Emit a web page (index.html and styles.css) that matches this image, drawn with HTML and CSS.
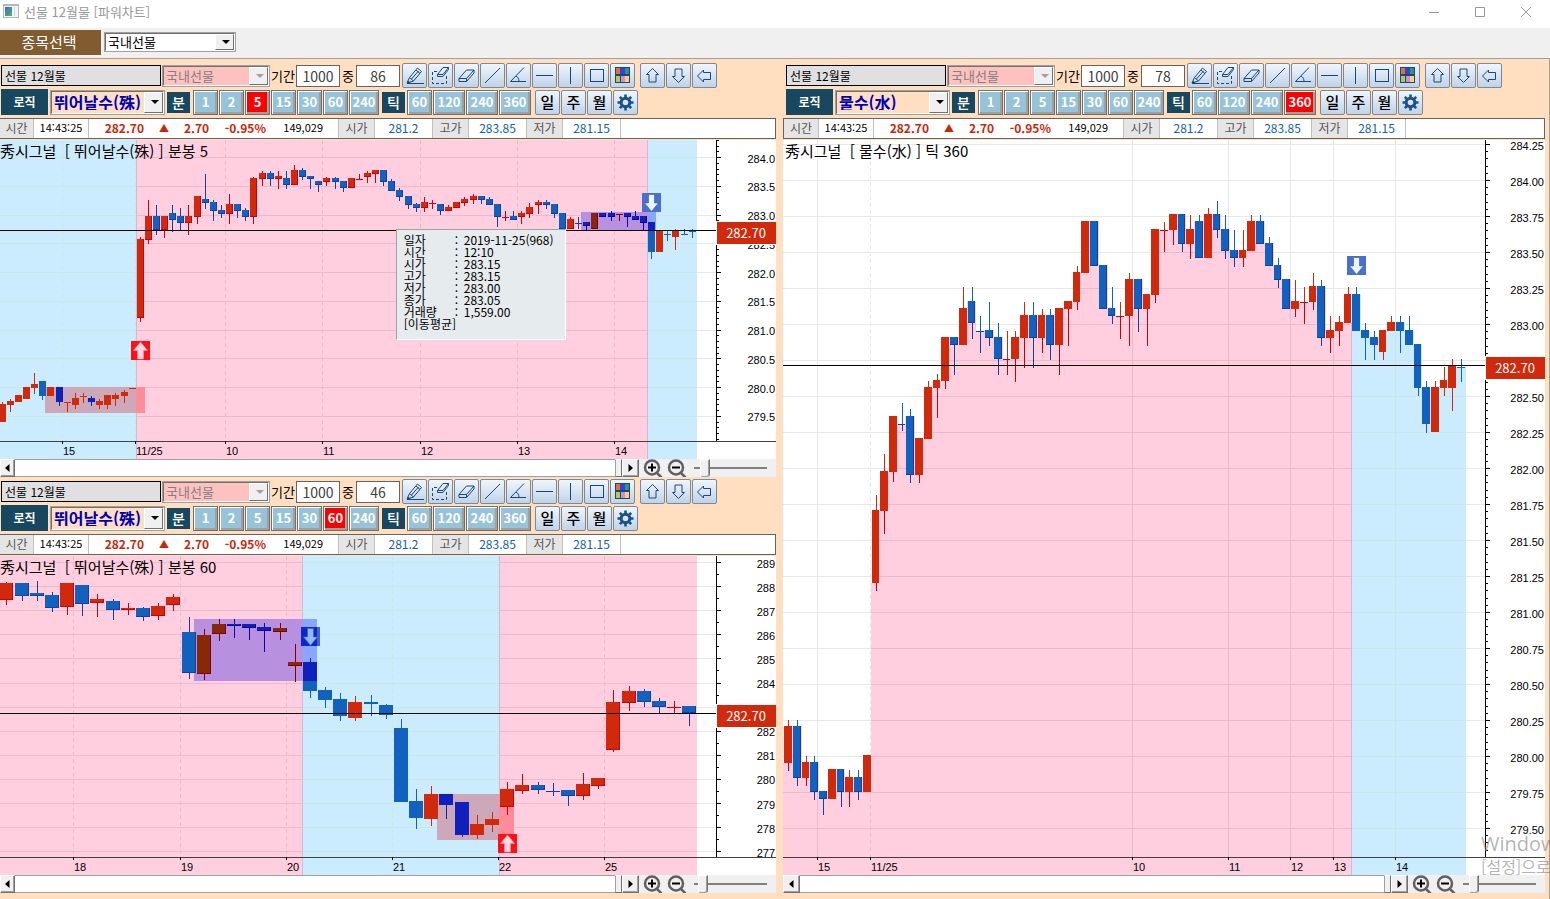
FILE: index.html
```html
<!DOCTYPE html>
<html lang="ko">
<head>
<meta charset="utf-8">
<title>선물 12월물 [파워차트]</title>
<link rel="stylesheet" href="styles.css">
</head>
<body>
<svg class="defs" aria-hidden="true">
  <symbol id="i-pencil" viewBox="0 0 25 25"><path class="s" d="M7.500 14.500L15.500 5l4 3.500-8 9.500M14 7l4 3.500M9.500 16l7-8M7.500 14.500l4 3.500M7.500 14.500L5 20l6.500-2M5 20.500h17"/><path class="f" d="M5 21l1-3.500 2.500 2.500z"/></symbol>
  <symbol id="i-erasebox" viewBox="0 0 25 25"><path class="s" stroke-dasharray="3 2" d="M9 8.500H4.500v12h14v-8"/><path class="s" d="M9.500 11.500l5.500-7h5.500v2l-5.500 7h-5.500zM9.500 11.500h5.500l5.500-7"/></symbol>
  <symbol id="i-eraser" viewBox="0 0 25 25"><path class="s" d="M5 15.500l7.500-8.500h7.500v3l-7.500 8.500H5zM5 15.500h7.500l7.500-8.500M12.500 15.500v3"/></symbol>
  <symbol id="i-line" viewBox="0 0 25 25"><path class="s" d="M5 20L20 5"/></symbol>
  <symbol id="i-angle" viewBox="0 0 25 25"><path class="s" d="M18 4.500L4.500 18.500H20M10 13c2 1 3 3 3 5.500"/></symbol>
  <symbol id="i-hline" viewBox="0 0 25 25"><path class="s" d="M4 12.500h17"/></symbol>
  <symbol id="i-vline" viewBox="0 0 25 25"><path class="s" d="M12.500 4v17"/></symbol>
  <symbol id="i-square" viewBox="0 0 25 25"><rect class="s" x="6.500" y="6.500" width="13" height="12"/></symbol>
  <symbol id="i-palette" viewBox="0 0 25 25"><path fill="#184878" d="M5 4h15v16H5z"/><path fill="#e07038" d="M6 5h4v6H6z"/><path fill="#2848d8" d="M10 5h5v6h-5z"/><path fill="#389078" d="M15 5h4v6h-4z"/><path fill="#b0cc48" d="M6 13h4v6H6z"/><path fill="#d888d8" d="M11 13h4v6h-4z"/><path fill="#ffd078" d="M15 13h4v6h-4z"/></symbol>
  <symbol id="i-up" viewBox="0 0 25 25"><path class="s" d="M12.500 5.500l6 6h-2.500v7.500H9v-7.500H6.500z"/></symbol>
  <symbol id="i-down" viewBox="0 0 25 25"><path class="s" d="M12.500 19.500l6-6h-2.500V6H9v7.500H6.500z"/></symbol>
  <symbol id="i-left" viewBox="0 0 25 25"><path class="s" d="M5.500 13l6-6v2.500h7v7h-7V19z"/></symbol>
  <symbol id="i-gear" viewBox="0 0 25 25"><circle cx="12.500" cy="12.500" r="4.300" fill="none" stroke="#1a5088" stroke-width="3"/><path fill="none" stroke="#1a5088" stroke-width="2.600" d="M12.500 4.500v3M12.500 17.500v3M4.500 12.500h3M17.500 12.500h3M6.800 6.800l2 2M16.200 16.200l2 2M6.800 18.200l2-2M16.200 8.800l2-2"/></symbol>
  <symbol id="i-zoomin" viewBox="0 0 20 18"><circle cx="9" cy="8.500" r="7" class="z"/><path class="z" d="M14 14l4.500 4.500"/><path stroke="#000" stroke-width="2" d="M5 8.500h8M9 4.500v8"/></symbol>
  <symbol id="i-zoomout" viewBox="0 0 20 18"><circle cx="9" cy="8.500" r="7" class="z"/><path class="z" d="M14 14l4.500 4.500"/><path stroke="#000" stroke-width="2" d="M5 8.500h8"/></symbol>
</svg>

<header class="titlebar">
  <svg class="app-icon" viewBox="0 0 16 14"><path fill="#b0b8c0" d="M0 0h16v14H0z"/><path fill="#f4f4f4" d="M1 2h14v11H1z"/><path fill="#4890a0" d="M2 3h7v9H2z"/><path fill="#4870b0" d="M2 3h4l-4 5z"/><path fill="#58a868" d="M9 7v5H4z"/><path fill="#d0d8dc" d="M11 3h1v9h-1z"/></svg>
  <h1 class="window-title">선물 12월물 [파워차트]</h1>
  <div class="window-controls">
    <button type="button" aria-label="최소화"><svg viewBox="0 0 12 12"><path d="M1 6.500h10"/></svg></button>
    <button type="button" aria-label="최대화"><svg viewBox="0 0 12 12"><path d="M1.500 1.500h9v9h-9z"/></svg></button>
    <button type="button" aria-label="닫기"><svg viewBox="0 0 12 12"><path d="M1 1l10 10M11 1L1 11"/></svg></button>
  </div>
</header>

<nav class="menubar">
  <label class="menu-label" for="market">종목선택</label>
  <span class="combo combo-market"><select id="market"><option>국내선물</option></select></span>
</nav>

<main class="workspace">
  <div class="column">
    <section class="panel" id="panel-a"></section>
    <section class="panel" id="panel-b"></section>
  </div>
  <div class="column column-right">
    <section class="panel" id="panel-c"></section>
  </div>
</main>

<aside class="watermark"><p class="wm-title">Windows</p><p class="wm-text">[설정]으로</p></aside>
<script src="app.js"></script>
</body>
</html>
```

FILE: styles.css
```css
* { box-sizing: border-box; }

body {
  margin: 0;
  min-height: 100vh;
  display: flex;
  flex-direction: column;
  overflow-x: hidden;
  position: relative;
  background: #fff;
  color: #000;
  font: 12px/16px "Noto Sans CJK KR", "Noto Sans", sans-serif;
}

button, input, select { font: inherit; color: inherit; margin: 0; padding: 0; border-radius: 0; }
h1, p { margin: 0; font-weight: 400; }
.defs { position: absolute; width: 0; height: 0; }

/* window chrome */
.titlebar { height: 28px; display: flex; align-items: flex-start; padding: 4px 14px 0 3px; }
.app-icon { width: 16px; height: 14px; margin-right: 5px; }
.window-title { font-size: 13px; line-height: 15px; color: #999; flex: 1; }
.window-controls { display: flex; gap: 26px; }
.window-controls button { width: 20px; height: 16px; border: 0; background: none; }
.window-controls svg { width: 12px; height: 12px; display: block; margin: 1px auto; fill: none; stroke: #999; }

.menubar { height: 31px; display: flex; align-items: center; gap: 3px; background: #f0f0f0; border-bottom: 1px solid #a0a0a0; padding-bottom: 2px; }
.menu-label { width: 101px; height: 25px; line-height: 24px; padding-right: 3px; text-align: center; font-size: 15px; color: #fff; background: #805c30; }

/* drop-downs */
.combo { position: relative; display: inline-block; }
.combo select {
  width: 100%; height: 100%; display: block; appearance: none; background: #fff;
  border: 2px solid; border-color: #707070 #fff #fff #707070; outline: 1px solid #a0a0a0; outline-offset: -1px;
  padding-left: 2px; font-size: 13px; opacity: 1;
}
.combo::before { content: ""; position: absolute; right: 2px; top: 2px; bottom: 2px; width: 17px; background: #f0f0f0; border: 1px solid; border-color: #fff #707070 #707070 #fff; pointer-events: none; z-index: 1; }
.combo::after { content: ""; position: absolute; right: 6px; top: 50%; margin-top: -2px; border: 4px solid transparent; border-top-color: #000; border-bottom: 0; pointer-events: none; z-index: 1; }
.combo-market { width: 132px; height: 20px; }
.combo-type { width: 108px; height: 22px; }
.combo-type select { background: #ffc0c0; color: #808080; }
.combo-type::after { border-top-color: #a0a0a0; }
.combo-logic { width: 115px; height: 25px; margin: 0 2px; }
.combo-logic select { background: #ffdfc0; color: #0000b8; font-size: 16px; font-weight: 700; }

/* layout of the chart panels */
.workspace { flex: 1; display: grid; grid-template-columns: 776fr 762fr; gap: 7px; padding: 4px 4px 6px 0; background: #ffdfbf; border-right: 1px solid #a0a0a0; }
.column { display: flex; flex-direction: column; gap: 2px; min-width: 0; }
.panel { flex: 1; display: flex; flex-direction: column; min-width: 0; }
.bar { display: flex; align-items: center; padding-left: 1px; white-space: nowrap; }
.column-right .bar { padding-left: 3px; }
.bar-top { height: 25px; }
.bar-bottom { height: 26px; margin: 1px 0 3px; }

.symbol { width: 160px; height: 21px; margin-right: 1px; padding-left: 3px; background: #e0e0e0; border: 1px solid #000; }
.field-label { font-size: 13px; width: 26px; text-align: center; }
.field-label-short { width: 16px; }
.count { width: 44px; height: 22px; border: 1px solid #646464; background: #fff; color: #404040; font-size: 14px; text-align: center; }
.tools { display: flex; gap: 1px; margin-left: 2px; }
.tools + .tools { margin-left: 5px; }
.tool { width: 25px; height: 25px; border: 1px solid #7c8898; border-radius: 2px; background: linear-gradient(#eff6fc, #c0d3e7); display: grid; place-items: center; font-size: 15px; line-height: 20px; font-weight: 500; }
.tool svg { width: 25px; height: 25px; margin: -1px; }
.s { fill: none; stroke: #184878; stroke-width: 1; }
.f { fill: #184878; }
.tools-period { margin-left: 4px; }

.tag { background: #184860; color: #fff; text-align: center; font-weight: 500; }
.tag-logic { width: 47px; height: 26px; line-height: 25px; font-weight: 700; }
.tag-unit { width: 23px; height: 21px; line-height: 20px; font-size: 14px; }
.steps { display: flex; gap: 1px; margin: 0 3px; }
.steps-tick { margin: 0 0 0 2px; }
.step { width: 25px; height: 25px; border: 1px solid #707070; background: #96c3d8; color: #fff; font-size: 13px; line-height: 20px; font-weight: 700; text-align: center; box-shadow: inset 1px 1px #fff, inset -2px -2px #a0a0a0; }
.step-wide { width: 30px; }
.steps-tick .step-wide { width: 32px; }
.step[aria-pressed="true"] { background: #f00; }

/* quote strip */
.quote { height: 21px; display: flex; line-height: 17px; background: #fff; border: 1px solid #646464; border-left: 0; margin-bottom: 1px; font-size: 11px; }
.column-right .quote { border-left: 1px solid #646464; }
.quote span { text-align: right; flex: none; border-right: 0 solid #c0c0c0; height: 19px; }
.quote .q-label { width: 36px; background: #e5e5e5; color: #555; text-align: center; border-right-width: 1px; font-size: 12px; }
.quote .q-first { width: 34px; }
.column-right .quote .q-first { width: 35px; }
.quote .q-time { width: 55px; text-align: center; border-right-width: 1px; }
.quote .q-red { color: #c82808; font-weight: 700; font-size: 12px; }
.quote .q-price { width: 55px; }
.quote .q-mark { width: 40px; text-align: center; font-size: 10px; }
.quote .q-change { width: 24px; }
.quote .q-pct { width: 58px; }
.quote .q-volume { width: 73px; padding-right: 15px; border-right-width: 1px; }
.quote .q-value { width: 58px; text-align: center; color: #1060b8; border-right-width: 1px; font-size: 12px; }

/* chart */
.chart { position: relative; flex: 1; min-height: 240px; background: #fff; overflow: hidden; }
.chart-svg { position: absolute; inset: 0; width: 100%; height: 100%; display: block; shape-rendering: crispEdges; }
.axis-text { font: 11px "Liberation Sans", Arial, sans-serif; fill: #000; }
.chart-title { font-size: 15px; white-space: pre; }
.price-text { font-size: 13px; fill: #fff; text-anchor: middle; }
.end { text-anchor: end; }

.tooltip { position: absolute; left: 51%; top: 28%; width: 170px; height: 111px; margin: 0; padding: 4px 0 0 7px; background: #e6ebee; border: 1px solid; border-color: #a0a0a0 #fff #fff #a0a0a0; line-height: 12px; }
.tooltip div { display: flex; }
.tooltip dt { width: 51px; }
.tooltip dt.wide { width: auto; }
.tooltip dd { margin: 0; }
.tooltip dd::before { content: ":"; display: inline-block; width: 9px; }

/* scroll and zoom strip */
.scroller { height: 18px; display: flex; background: #f0f0f0; }
.scroll-btn { width: 17px; height: 18px; border: 1px solid; border-color: #fff #707070 #707070 #fff; background: #f0f0f0; box-shadow: inset -1px -1px #a0a0a0; display: grid; place-items: center; }
.scroll-btn svg { width: 5px; height: 8px; display: block; }
.scroll-first { width: 15px; }
.column-right .scroll-first { width: 17px; }
.scroll-track { flex: 1; background: #fff; border-top: 1px solid #a0a0a0; border-bottom: 1px solid #a0a0a0; }
.scroll-end { width: 7px; border: 1px solid; border-color: #fff #707070 #707070 #a0a0a0; }
.zoom-btn { width: 20px; height: 18px; border: 0; background: none; margin-left: 4px; }
.zoom-btn svg { display: block; width: 20px; height: 18px; }
.z { fill: none; stroke: #606060; stroke-width: 2.500; }
.zoom-range { appearance: none; width: 73px; height: 18px; margin: 0 9px 0 7px; background: linear-gradient(#808080, #808080) 0 8px / 100% 2px no-repeat; }
.zoom-range::-webkit-slider-thumb { appearance: none; width: 10px; height: 18px; background: #f0f0f0; border: 1px solid; border-color: #fff #707070 #a0a0a0 #fff; box-shadow: inset -1px 0 #a0a0a0; border-radius: 0 0 3px 3px; }

.watermark { position: absolute; right: 0; bottom: 23px; width: 69px; overflow: hidden; white-space: nowrap; color: rgba(130, 130, 130, 0.6); pointer-events: none; }
.wm-title { font: 20px/24px "Open Sans", sans-serif; }
.wm-text { font-size: 16px; line-height: 20px; }
```

FILE: app.js
```js
/* Candle rows: [left, high, bodyTop, bodyBottom, low, kind]
   kinds: r rising, b falling, D falling inside a signal box, W rising inside a signal box */
const RED = '#d0290b', BLUE = '#1062be', RED_EDGE = '#c80010', BLUE_EDGE = '#1040a0';
const FILL = { r: RED, b: BLUE, D: '#1020bc', W: '#882808' };
const EDGE = { r: RED_EDGE, b: BLUE_EDGE, D: '#1000a0', W: '#800008' };
const PINK = ['#ffcfdf', '#e8bcca'], SKY = ['#cbecff', '#c8e8e6'];

const chartA = {
  x0: 0, y0: 140, w: 776, h: 319, bodyW: 7, wick: 3, axisX: 716, axisY: 441, price: 230,
  title: '秀시그널  [ 뛰어날수(殊) ] 분봉 5', dashed: true,
  grid: { from: 157.5, step: 28.75, count: 10, top: 284, unit: 0.5, digits: 1, minor: 5 },
  times: [[62, '15'], [135, '11/25'], [225, '10'], [322, '11'], [420, '12'], [517, '13'], [614, '14']],
  zones: [[0, 136, SKY], [136, 647, PINK], [647, 697, SKY]],
  boxes: [[45, 387, 136, 413, '#cca8b8'], [136, 387, 145, 413, '#ff8c98'], [581, 212, 648, 230, '#b890e0'], [648, 212, 656, 230, '#88a8ff']],
  marks: [[131, 341, 'up'], [642, 193, 'down']],
  candles: [[-1,402,404,422,422,'r'],[7,399,401,405,412,'r'],[15,395,395,402,402,'r'],[23,387,387,399,399,'r'],[31,373,384,388,394,'r'],[39,381,381,396,400,'b'],[47,387,387,396,396,'r'],[56,387,387,402,406,'D'],[64,402,402,403,412,'r'],[72,393,398,405,409,'r'],[80,393,396,397,403,'r'],[88,396,398,402,406,'D'],[96,399,401,405,409,'r'],[104,395,395,405,409,'r'],[112,393,395,399,406,'r'],[121,390,392,396,403,'r'],[129,388,388,389,389,'r'],
    [137,237,239,318,322,'r'],[145,200,216,240,244,'r'],[153,205,216,230,235,'b'],[161,216,216,230,238,'r'],[169,205,213,220,232,'b'],[177,208,216,223,230,'b'],[185,205,216,223,235,'r'],[194,196,196,217,224,'r'],[202,174,199,203,209,'b'],[210,200,202,211,221,'b'],[218,205,210,214,218,'b'],[226,194,204,214,224,'r'],[234,204,204,211,218,'b'],[242,208,210,217,221,'b'],[250,177,178,217,224,'r'],[259,171,173,179,186,'r'],[267,171,173,179,186,'b'],[275,171,176,179,189,'r'],[283,171,178,185,189,'b'],[291,165,170,185,185,'r'],[299,168,170,177,180,'b'],[307,176,176,179,189,'b'],[315,181,181,185,192,'b'],[323,177,178,182,186,'r'],[332,177,178,182,189,'b'],[340,181,181,188,192,'b'],[348,178,178,188,188,'r'],[356,174,179,180,180,'r'],[364,171,173,177,183,'r'],[372,170,170,174,183,'r'],[380,170,170,182,186,'b'],[388,179,181,191,191,'b'],[396,188,190,197,201,'b'],
    [405,196,196,205,209,'b'],[413,203,204,208,212,'b'],[421,197,202,208,212,'r'],[429,200,203,204,209,'r'],[437,204,204,211,215,'b'],[445,205,207,211,211,'r'],[453,202,202,208,208,'r'],[461,197,199,203,206,'r'],[470,194,196,200,204,'r'],[478,196,196,200,204,'b'],[486,197,199,205,205,'b'],[494,204,204,217,227,'b'],[502,211,217,218,221,'r'],[510,211,216,220,220,'b'],[518,211,213,217,224,'r'],[526,203,207,214,218,'r'],[535,200,202,205,214,'r'],[543,200,202,205,209,'b'],[551,204,204,214,218,'b'],[559,213,213,229,229,'b'],[567,217,219,229,229,'r'],[575,217,223,224,229,'b'],[583,222,222,226,230,'D'],[591,213,213,229,229,'W'],[599,213,213,217,217,'D'],[608,211,213,217,221,'D'],[616,214,214,215,221,'W'],[624,213,213,217,227,'D'],[632,211,216,220,220,'D'],[640,216,216,223,230,'D'],[648,222,222,252,259,'b'],[648,222,222,230,230,'D'],[656,231,231,252,252,'r'],[664,231,234,235,241,'b'],[672,229,231,237,250,'r'],[681,229,234,235,235,'b'],[689,229,231,232,238,'b']]
};

const chartB = {
  x0: 0, y0: 556, w: 776, h: 319, bodyW: 14, wick: 7, axisX: 716, axisY: 857, price: 713,
  title: '秀시그널  [ 뛰어날수(殊) ] 분봉 60', dashed: true,
  grid: { from: 562.5, step: 24.1, count: 13, top: 289, unit: 1, digits: 0, minor: 2 },
  times: [[73, '18'], [180, '19'], [286, '20'], [392, '21'], [498, '22'], [604, '25']],
  zones: [[0, 302, PINK], [302, 499, SKY], [499, 697, PINK]],
  boxes: [[194, 619, 303, 681, '#b890e0'], [303, 619, 317, 681, '#88a8ff'], [437, 794, 499, 840, '#cca8b8'], [499, 794, 514, 840, '#ff8c98']],
  marks: [[301, 627, 'deep'], [498, 834, 'up']],
  candles: [[-1,582,583,600,605,'r'],[15,583,583,596,601,'b'],[30,581,593,596,601,'b'],[45,592,595,608,612,'b'],[60,583,583,607,615,'r'],[75,585,585,604,616,'b'],[90,594,599,603,617,'r'],[106,599,601,610,620,'b'],[121,603,608,610,615,'r'],[136,607,608,617,621,'b'],[151,603,606,616,620,'r'],[166,594,597,605,611,'r'],[182,617,632,673,679,'b'],[197,629,635,674,680,'W'],[212,619,624,634,641,'W'],[227,619,624,626,638,'D'],[242,624,624,628,640,'D'],[257,623,627,631,652,'D'],[273,623,628,632,640,'W'],[288,644,662,666,682,'W'],[303,662,662,691,698,'b'],[303,658,662,681,681,'D'],[318,687,690,700,708,'b'],[333,693,699,716,721,'b'],[348,696,702,718,721,'r'],[364,695,702,704,716,'b'],[379,704,705,715,719,'b'],[394,719,728,802,802,'b'],[409,789,801,818,829,'b'],[424,786,794,819,826,'r'],[439,794,794,805,819,'D'],[455,802,802,835,837,'D'],[470,815,824,835,839,'r'],[485,812,819,825,832,'r'],[500,782,789,807,815,'r'],[515,774,785,791,794,'r'],[531,782,785,790,794,'b'],[546,783,791,792,796,'b'],[561,790,790,796,806,'b'],[576,773,784,796,800,'r'],[591,778,778,786,789,'r'],[606,690,702,750,752,'r'],[622,686,691,703,711,'r'],[637,689,691,702,707,'b'],[652,698,701,707,713,'b'],[667,701,707,708,713,'r'],[682,706,706,713,726,'b']]
};

const chartC = {
  x0: 783, y0: 140, w: 762, h: 735, bodyW: 8, wick: 4, axisX: 1485, axisY: 857, price: 365, area: true,
  title: '秀시그널  [ 물수(水) ] 틱 360', dashed: false,
  grid: { from: 144.5, step: 36, count: 20, top: 284.25, unit: 0.25, digits: 2, minor: 5 },
  times: [[817, '15'], [870, '11/25'], [1132, '10'], [1228, '11'], [1290, '12'], [1333, '13'], [1395, '14']],
  zones: [[783, 1351, PINK], [1351, 1466, SKY]],
  boxes: [], marks: [[1347, 256, 'down']],
  candles: [[784,720,726,763,771,'r'],[793,720,726,778,786,'b'],[802,756,762,778,786,'r'],[810,756,762,792,800,'b'],[819,791,791,799,815,'b'],[828,769,769,799,799,'r'],[837,769,769,792,807,'b'],[845,770,777,792,807,'r'],[854,770,777,792,800,'b'],[863,755,755,792,792,'r'],[872,495,510,583,591,'r'],[880,454,471,511,534,'r'],[889,416,416,472,482,'r'],[898,403,424,425,431,'b'],[906,409,416,475,483,'b'],[915,438,438,475,483,'r'],[924,381,387,439,439,'r'],[933,374,380,388,418,'r'],[941,337,337,381,389,'r'],[950,337,337,345,375,'b'],[959,287,308,345,345,'r'],[968,287,301,323,339,'b'],[976,316,331,332,353,'b'],[985,302,330,338,346,'b'],[994,323,337,359,375,'b'],[1003,331,359,360,375,'r'],[1011,331,337,359,382,'r'],[1020,302,315,338,368,'r'],[1029,302,315,338,368,'b'],[1038,309,315,338,353,'r'],[1046,309,315,345,360,'b'],[1055,308,308,345,375,'r'],[1064,301,301,309,346,'r'],[1073,266,272,302,310,'r'],[1081,221,221,273,273,'r'],[1090,221,221,266,266,'b'],[1099,265,265,309,309,'b'],[1108,287,308,316,324,'b'],[1116,302,316,317,339,'r'],[1125,273,279,316,346,'r'],[1134,279,279,309,332,'b'],[1143,294,294,309,346,'r'],[1151,229,229,295,303,'r'],[1160,222,230,231,252,'r'],[1169,214,214,230,245,'r'],[1178,214,214,244,252,'b'],[1186,215,229,244,259,'r'],[1195,215,221,258,258,'b'],[1204,208,214,258,258,'r'],[1213,201,214,230,238,'b'],[1221,215,229,251,259,'b'],[1230,230,250,258,267,'b'],[1239,230,250,258,267,'r'],[1247,215,221,251,251,'r'],[1256,215,221,244,244,'b'],[1265,237,243,266,266,'b'],[1274,258,265,280,288,'b'],[1282,279,279,309,309,'b'],[1291,280,301,309,317,'r'],[1300,287,302,303,324,'r'],[1309,273,286,302,310,'r'],[1317,280,286,338,346,'b'],[1326,316,330,338,353,'r'],[1335,316,322,331,346,'r'],[1344,287,294,323,323,'r'],[1352,287,294,331,331,'b'],[1361,323,330,338,360,'b'],[1370,331,337,345,360,'b'],[1379,330,330,352,360,'r'],[1387,316,322,331,331,'r'],[1396,316,322,331,353,'b'],[1405,316,330,345,345,'b'],[1414,344,344,388,396,'b'],[1422,381,387,424,433,'b'],[1431,381,387,432,432,'r'],[1440,367,380,388,396,'r'],[1448,359,365,388,411,'r'],[1457,359,367,368,382,'b']]
};

const panels = [
  { id: 'panel-a', chart: chartA, count: 86, logic: '뛰어날수(殊)', active: '분5', zoom: 9, tip: true },
  { id: 'panel-b', chart: chartB, count: 46, logic: '뛰어날수(殊)', active: '분60', zoom: 6 },
  { id: 'panel-c', chart: chartC, count: 78, logic: '물수(水)', active: '틱360', zoom: 9 }
];

const icon = name => `<svg aria-hidden="true"><use href="#i-${name}"/></svg>`;
const tool = ([name, label]) => `<button type="button" class="tool" aria-label="${label}">${icon(name)}</button>`;

function steps(unit, values, active) {
  return values.map(v =>
    `<button type="button" class="step${v > 99 ? ' step-wide' : ''}" aria-pressed="${unit + v === active}">${v}</button>`).join('');
}

function panelHtml(p) {
  const tip = [['일자', '2019-11-25(968)'], ['시간', '12:10'], ['시가', '283.15'], ['고가', '283.15'], ['저가', '283.00'], ['종가', '283.05'], ['거래량', '1,559.00']];
  return `
  <div class="bar bar-top">
    <input class="symbol" value="선물 12월물" aria-label="종목" readonly>
    <span class="combo combo-type"><select aria-label="구분" disabled><option>국내선물</option></select></span>
    <label class="field-label" for="${p.id}-total">기간</label>
    <input class="count" id="${p.id}-total" value="1000">
    <label class="field-label field-label-short" for="${p.id}-shown">중</label>
    <input class="count" id="${p.id}-shown" value="${p.count}">
    <div class="tools">${[['pencil', '그리기'], ['erasebox', '영역 지우기'], ['eraser', '지우기'], ['line', '추세선'], ['angle', '각도선'], ['hline', '수평선'], ['vline', '수직선'], ['square', '사각형'], ['palette', '색상']].map(tool).join('')}</div>
    <div class="tools">${[['up', '위로'], ['down', '아래로'], ['left', '왼쪽으로']].map(tool).join('')}</div>
  </div>
  <div class="bar bar-bottom">
    <span class="tag tag-logic">로직</span>
    <span class="combo combo-logic"><select aria-label="로직"><option>${p.logic}</option></select></span>
    <span class="tag tag-unit">분</span>
    <div class="steps">${steps('분', [1, 2, 5, 15, 30, 60, 240], p.active)}</div>
    <span class="tag tag-unit">틱</span>
    <div class="steps steps-tick">${steps('틱', [60, 120, 240, 360], p.active)}</div>
    <div class="tools tools-period">
      <button type="button" class="tool">일</button><button type="button" class="tool">주</button><button type="button" class="tool">월</button>${tool(['gear', '설정'])}
    </div>
  </div>
  <div class="quote">
    <span class="q-label q-first">시간</span><span class="q-time">14:43:25</span>
    <span class="q-red q-price">282.70</span><span class="q-red q-mark">▲</span><span class="q-red q-change">2.70</span><span class="q-red q-pct">-0.95%</span>
    <span class="q-volume">149,029</span>
    <span class="q-label">시가</span><span class="q-value">281.2</span>
    <span class="q-label">고가</span><span class="q-value">283.85</span>
    <span class="q-label">저가</span><span class="q-value">281.15</span>
  </div>
  <div class="chart"><svg class="chart-svg" role="img" aria-label="${p.chart.title}"></svg>
    ${p.tip ? `<dl class="tooltip">${tip.map(([k, v]) => `<div><dt>${k}</dt><dd>${v}</dd></div>`).join('')}<div><dt class="wide">[이동평균]</dt></div></dl>` : ''}
  </div>
  <div class="scroller">
    <button type="button" class="scroll-btn scroll-first" aria-label="이전"><svg viewBox="0 0 5 8"><path d="M4.500 0v8L0 4z"/></svg></button>
    <div class="scroll-track"></div><div class="scroll-end"></div>
    <button type="button" class="scroll-btn" aria-label="다음"><svg viewBox="0 0 5 8"><path d="M.5 0v8L5 4z"/></svg></button>
    <button type="button" class="zoom-btn" aria-label="확대">${icon('zoomin')}</button>
    <button type="button" class="zoom-btn" aria-label="축소">${icon('zoomout')}</button>
    <input type="range" class="zoom-range" aria-label="배율" value="${p.zoom}">
  </div>`;
}

function draw(id, c) {
  const svg = document.querySelector(`#${id} .chart-svg`);
  const W = svg.clientWidth, H = svg.clientHeight;
  const X = x => Math.round((x - c.x0) * W / c.w);
  const Y = y => Math.round((y - c.y0) * H / c.h);
  const rect = (x1, y1, x2, y2, fill) => `<rect x="${X(x1)}" y="${Y(y1)}" width="${Math.max(1, X(x2) - X(x1))}" height="${Math.max(1, Y(y2) - Y(y1))}" fill="${fill}"/>`;
  const right = c.axisX, top = c.y0, bottom = c.axisY, g = c.grid;
  const bodyW = i => {
    const next = c.candles[i + 1];
    return c.area && next ? Math.min(c.bodyW, next[0] - c.candles[i][0] - 1) : c.bodyW;
  };
  const lines = (color) => {
    let s = '';
    for (let i = 0; i < g.count; i++) {
      const y = Math.floor(g.from + g.step * i);
      if (y < bottom) s += rect(c.x0, y, right, y + 1, color);
    }
    c.times.forEach(([x, label]) => {
      const dash = c.dashed || label === '11/25' ? 'stroke-dasharray="4 3"' : '';
      s += `<path d="M${X(x) + 0.5} 0V${Y(bottom)}" stroke="${color}" ${dash}/>`;
    });
    return s;
  };

  let out = lines('#e8e8e8');
  c.zones.forEach(([a, b, [fill, line]], n) => {
    let d = `M${X(a)} 0H${X(b)}V${H}H${X(a)}z`;
    if (c.area) {
      d = '';
      c.candles.forEach(([x, , t, bt, , k], i) => {
        if (x < a - 1 || x >= b) return;
        const next = c.candles[i + 1];
        const x2 = next && next[0] < b ? next[0] - 1 + (k === 'b' ? 1 : 0) : b;
        d += `M${X(Math.max(a, x - 1))} ${Y(k === 'b' ? t : bt)}H${X(x2)}V${H}H${X(Math.max(a, x - 1))}z`;
      });
    }
    out += `<clipPath id="${id}-z${n}"><path d="${d}"/></clipPath><g clip-path="url(#${id}-z${n})">${rect(a, top, b, c.y0 + c.h, fill)}${lines(line)}</g>`;
    if (n) out += rect(a, c.area ? 323 : top, a + 1, c.y0 + c.h, '#ccbcd8');
  });

  c.boxes.forEach(b => { out += rect(...b); });
  c.candles.forEach(([x, hi, t, b, lo, k], i) => {
    const w = bodyW(i), mid = x + c.wick;
    const zone = c.zones.find(z => x >= z[0] - 1 && x < z[1]);
    const pink = zone && zone[2] === PINK;
    const edge = pink ? EDGE[k] : FILL[k];
    if (t > hi) out += rect(mid, hi, mid + 1, t, c.area ? FILL[k] : edge);
    if (lo > b) out += rect(mid, b, mid + 1, lo, edge);
    out += rect(x, t, x + w, b, c.area && k === 'r' && b - t > 1 ? FILL[k] : edge);
    if (pink && b - t > 1) out += rect(x, t, x + w - 1, b - 1, FILL[k]);
  });

  c.marks.forEach(([x, y, kind]) => {
    const up = kind === 'up';
    out += `<g transform="translate(${X(x)} ${Y(y)})"><path d="M0 0h19v19H0z" fill="${up ? '#ff1018' : kind === 'deep' ? '#0828d0' : '#4870cc'}"/>
      ${kind === 'deep' ? '<path d="M16 0h3v19h-3z" fill="#4860d0"/>' : ''}
      <path d="M9.500 1l7 8.500h-4V18h-6V9.500h-4z" ${up ? '' : 'transform="rotate(180 9.500 9.700)"'} fill="${up ? '#ffd8e4' : kind === 'deep' ? '#90b8ff' : '#e8f6ff'}" stroke="${up ? '#f09098' : '#506080'}" stroke-width=".7" shape-rendering="auto"/></g>`;
  });

  out += rect(c.x0, c.price, right, c.price + 1, '#000');
  out += rect(c.x0, bottom, c.x0 + c.w, bottom + 1, '#404040');
  out += rect(right, top, right + 1, bottom, '#000');
  for (let i = -g.minor; i < g.count * g.minor; i++) {
    const y = Math.floor(g.from + g.step * i / g.minor);
    if (y >= top && y < bottom) out += rect(right, y, right + (i % g.minor ? 3 : 5), y + 1, '#000');
  }
  for (let i = 0; i < g.count; i++) {
    const y = g.from + g.step * i;
    /* labels that the price tag would hide are left out */
    if (y < bottom && Math.abs(y - c.price) > 8) out += `<text class="axis-text end" x="${W - 1}" y="${Y(y) + 5}">${(g.top - g.unit * i).toFixed(g.digits)}</text>`;
  }
  if (c === chartB) out += rect(right + 1, bottom + 1, c.x0 + c.w, c.y0 + c.h, '#fff');
  c.times.forEach(([x, label]) => {
    out += rect(x, bottom, x + 1, bottom + 3, '#000');
    out += `<text class="axis-text" x="${X(x) + 1}" y="${Y(bottom) + 14}">${label}</text>`;
  });
  out += rect(right, c.price - 9, c.x0 + c.w, c.price + 15, '#fff');
  out += rect(right + 1, c.price - 8, c.x0 + c.w, c.price + 14, RED);
  out += `<text class="price-text" x="${X(right + 30)}" y="${Y(c.price) + 8}">282.70</text>`;
  out += `<text class="chart-title" x="${c.area ? 2 : 0}" y="17">${c.title}</text>`;
  svg.innerHTML = out;
}

panels.forEach(p => { document.getElementById(p.id).innerHTML = panelHtml(p); });
const redraw = () => panels.forEach(p => draw(p.id, p.chart));
redraw();
addEventListener('resize', redraw);
```
